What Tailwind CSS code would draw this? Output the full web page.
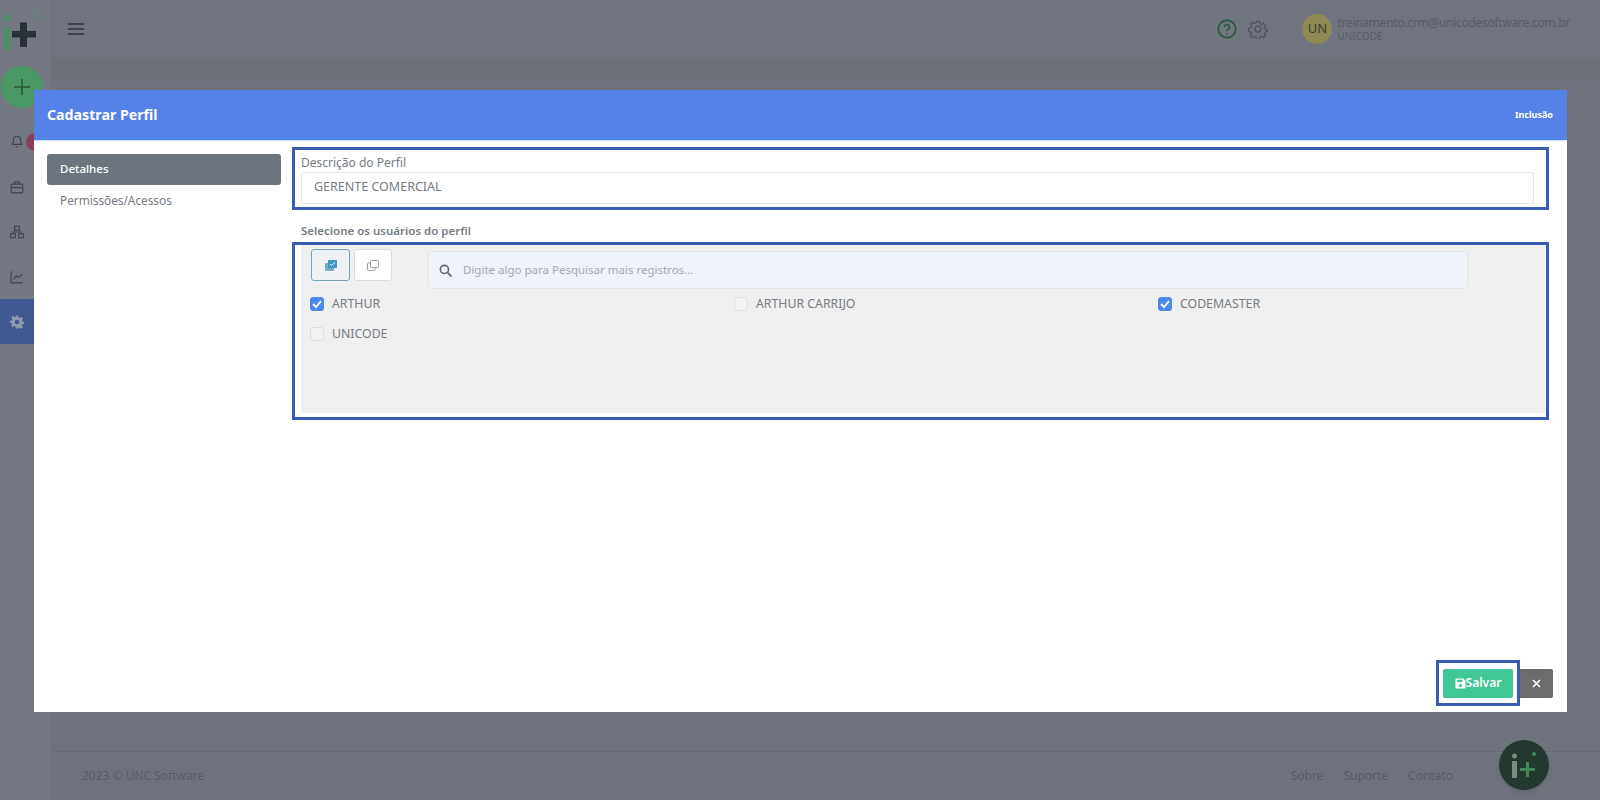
<!DOCTYPE html>
<html lang="pt-BR">
<head>
    <meta charset="UTF-8">
    <title>Cadastrar Perfil</title>
    <script src="https://cdn.jsdelivr.net/npm/@tailwindcss/browser@4"></script>
</head>
<body class="h-[800px] w-[1600px] overflow-hidden bg-[#6f737d] font-['Noto_Sans','Open_Sans',sans-serif] text-[#585c68]">

    <!-- page behind the modal -->
    <div class="flex h-[800px] w-[1600px]">
        <aside class="flex w-[52px] shrink-0 flex-col border-r border-[#6c7079] bg-[#747882]">
            <div class="h-[58px] pt-[10px]">
                <svg width="42" height="42" viewBox="0 0 42 42">
                    <circle cx="7" cy="8" r="3.500" fill="#4d8f63"/>
                    <rect x="4" y="17" width="6" height="23" fill="#4d8f63"/>
                    <path d="M20 12.500h7V21h9v6.500h-9V37h-7v-9.500h-8V21h8z" fill="#2a3038"/>
                    <circle cx="36" cy="5" r="3" fill="none" stroke="#5d8f70"/>
                </svg>
            </div>
            <div class="ml-[1px] mt-[8px] flex h-[42px] w-[42px] items-center justify-center rounded-full bg-[#4a9866]">
                <svg width="18" height="18" viewBox="0 0 18 18" stroke="#2b5a3d" stroke-width="1.600"><path d="M9 1v16M1 9h16"/></svg>
            </div>
            <div class="mt-[11px] flex flex-col">
                <div class="flex h-[45px] items-center pl-[10px]">
                    <svg width="14" height="15" viewBox="0 0 24 24" fill="none" stroke="#3f434c" stroke-width="2"><path d="M18 9a6 6 0 1 0-12 0c0 7-3 8-3 8h18s-3-1-3-8M10 21h4"/></svg>
                    <span class="ml-[2px] h-[18px] w-[18px] rounded-full bg-[#8c3f5c]"></span>
                </div>
                <div class="flex h-[45px] items-center pl-[10px]">
                    <svg width="14" height="14" viewBox="0 0 24 24" fill="none" stroke="#3f434c" stroke-width="2"><rect x="2" y="7" width="20" height="15" rx="2"/><path d="M8 7V3h8v4M2 13h20"/></svg>
                </div>
                <div class="flex h-[45px] items-center pl-[10px]">
                    <svg width="14" height="14" viewBox="0 0 24 24" fill="none" stroke="#3f434c" stroke-width="2"><rect x="8" y="2" width="8" height="7"/><rect x="1" y="15" width="8" height="7"/><rect x="15" y="15" width="8" height="7"/><path d="M5 15v-3h14v3"/></svg>
                </div>
                <div class="flex h-[45px] items-center pl-[10px]">
                    <svg width="14" height="14" viewBox="0 0 24 24" fill="none" stroke="#3f434c" stroke-width="2"><path d="M2 2v20h20M6 16l5-6 4 3 6-6"/></svg>
                </div>
                <div class="flex h-[45px] items-center bg-[#40588f] pl-[10px]">
                    <svg width="14" height="14" viewBox="0 0 24 24" fill="#8f99b0"><path d="M10 1h4l.6 3.200 2 .8L19.400 3.200l2.800 2.800-1.800 2.800.8 2 3.200.6v4l-3.200.6-.8 2 1.800 2.800-2.800 2.800-2.800-1.800-2 .8L14 23h-4l-.6-3.200-2-.8-2.800 1.800-2.800-2.800 1.800-2.800-.8-2L0 14v-4l3.200-.6.8-2L2.200 4.600 5 1.800l2.800 1.800 2-.8zM12 8a4 4 0 1 0 0 8 4 4 0 0 0 0-8z"/></svg>
                </div>
            </div>
        </aside>

        <main class="flex min-w-0 flex-1 flex-col">
            <header class="flex h-[58px] items-center bg-[#71757f] pl-[16px] pr-[30px]">
                <svg width="16" height="12" viewBox="0 0 16 12" stroke="#2f333b" stroke-width="1.700"><path d="M0 1h16M0 6h16M0 11h16"/></svg>
                <div class="ml-auto flex items-center">
                    <svg width="20" height="20" viewBox="0 0 24 24" fill="none" stroke="#2b5a3d" stroke-width="2.200"><circle cx="12" cy="12" r="10.500"/><path d="M9 9.500a3 3 0 1 1 4.500 2.600c-1 .6-1.500 1.200-1.500 2.400M12 17v1.500"/></svg>
                    <svg class="ml-[11px]" width="20" height="20" viewBox="0 0 24 24" fill="none" stroke="#4f535f" stroke-width="1.700"><circle cx="12" cy="12" r="3.500"/><path d="M10 2h4l.6 3 2.200 1 2.600-1.700 2.800 2.800-1.700 2.600 1 2.300 3 .6v2.800l-3 .6-1 2.200 1.700 2.600-2.800 2.800-2.600-1.700-2.200 1-.6 3h-4l-.6-3-2.200-1-2.600 1.700-2.800-2.800 1.700-2.600-1-2.200-3-.6V11l3-.6 1-2.300-1.700-2.600 2.800-2.800 2.600 1.700 2.200-1z" transform="translate(1.200 1.200) scale(.9)"/></svg>
                    <div class="ml-[34px] flex h-[30px] w-[30px] items-center justify-center rounded-full bg-[#8f8a52] text-[13px] text-[#3e3f33]">UN</div>
                    <div class="ml-[5px] flex flex-col">
                        <span class="text-[12px] leading-[15px] tracking-[-0.28px]">treinamento.crm@unicodesoftware.com.br</span>
                        <span class="text-[10px] leading-[13px]">UNICODE</span>
                    </div>
                </div>
            </header>
            <div class="h-[22px] bg-[#6d717a]"></div>
            <div class="flex-1"></div>
            <footer class="flex h-[49px] items-center border-t border-[#686c76] pl-[30px] pr-[147px] text-[12px]">
                <span>2023 © UNC Software</span>
                <nav class="ml-auto flex gap-[20px]">
                    <span>Sobre</span>
                    <span>Suporte</span>
                    <span>Contato</span>
                </nav>
            </footer>
        </main>
    </div>

    <!-- floating button -->
    <div class="fixed left-[1499px] top-[740px] flex h-[50px] w-[50px] items-center justify-center rounded-full bg-[#23392f] shadow-md">
        <svg width="26" height="28" viewBox="0 0 26 28">
            <circle cx="3.500" cy="5" r="2.500" fill="#7d8a82"/>
            <rect x="1" y="10" width="5" height="17" fill="#7d8a82"/>
            <path d="M15 11h3v6h6v3h-6v6h-3v-6H9v-3h6z" fill="#3f8a58"/>
            <circle cx="23" cy="3" r="2" fill="#3f8a58"/>
        </svg>
    </div>

    <!-- modal -->
    <div class="fixed left-[34px] top-[90px] flex h-[622px] w-[1533px] flex-col bg-white text-[#757c84]">
        <div class="flex h-[51px] shrink-0 items-center justify-between border-b border-[#cfe2ff] bg-[#5582e6] pl-[13px] pr-[14px] text-white">
            <h1 class="text-[14.200px] font-bold">Cadastrar Perfil</h1>
            <span class="text-[9px] font-bold">Inclusão</span>
        </div>
        <div class="flex min-h-0 flex-1">
            <div class="w-[247px] shrink-0 pl-[13px] pt-[13px] text-[11.800px]">
                <div class="flex h-[31px] items-center rounded-[3px] bg-[#6c757d] pb-[1px] pl-[13px] text-[11.500px] font-medium text-white">Detalhes</div>
                <div class="flex h-[31px] items-center pl-[13px]">Permissões/Acessos</div>
            </div>
            <div class="flex min-w-0 flex-1 flex-col pl-[11px] pt-[6px]">
                <div class="h-[63px] w-[1257px] border-[3px] border-[#3b5bb5] pl-[6px] pr-[12px] pt-[5px]">
                    <label class="block text-[12px] leading-[16px]">Descrição do Perfil</label>
                    <div class="mt-[1px] flex h-[32px] items-center rounded-[3px] border border-[#e4e7ea] pb-[1px] pl-[12px] text-[12.500px]">GERENTE COMERCIAL</div>
                </div>
                <div class="mb-[4px] mt-[13px] pl-[9px] text-[11.500px] font-semibold leading-[15px]">Selecione os usuários do perfil</div>
                <div class="h-[178px] w-[1257px] border-[3px] border-[#3b5bb5] pb-[4px] pl-[6px] pr-[1px]">
                    <div class="h-full bg-[#f0f0f0]">
                        <div class="flex h-[44px] pl-[10px] pt-[4px]">
                            <button class="flex h-[32px] w-[39px] items-center justify-center rounded-[3px] border border-[#74a5bd] bg-[#eef2f5]">
                                <svg width="12" height="11" viewBox="0 0 12 11"><rect x="0" y="3" width="9" height="8" rx="1" fill="#7ba9c4"/><rect x="3" y="0" width="9" height="8" rx="1" fill="#3f96c8"/><path d="M5 4l1.500 1.500L10 2.500" stroke="#fff" fill="none"/></svg>
                            </button>
                            <button class="ml-[4px] flex h-[32px] w-[38px] items-center justify-center rounded-[3px] border border-[#dcdcdc] bg-white">
                                <svg width="12" height="11" viewBox="0 0 12 11" fill="none" stroke="#9a9fa5"><rect x="3.500" y=".5" width="8" height="7" rx="1"/><path d="M3 3H1.500a1 1 0 0 0-1 1v5.500a1 1 0 0 0 1 1H7a1 1 0 0 0 1-1V8"/></svg>
                            </button>
                            <div class="ml-[36px] mt-[2px] flex h-[38px] w-[1040px] items-center rounded-[3px] border border-[#e3e6ea] bg-[#eff3fa] pl-[10px] text-[11.500px] text-[#a4a9b2]">
                                <svg width="13" height="13" viewBox="0 0 24 24" fill="none" stroke="#5f6670" stroke-width="3"><circle cx="10" cy="10" r="7.500"/><path d="M16 16l7 7"/></svg>
                                <span class="ml-[11px]">Digite algo para Pesquisar mais registros...</span>
                            </div>
                        </div>
                        <div class="grid grid-cols-[424px_424px_1fr] pl-[9px] text-[12.300px]">
                            <label class="flex h-[30px] items-center">
                                <span class="flex h-[14px] w-[14px] items-center justify-center rounded-[3px] bg-[#4c8bea]"><svg width="10" height="8" viewBox="0 0 10 8" fill="none" stroke="#fff" stroke-width="1.800"><path d="M1 4l3 3 5-6"/></svg></span>
                                <span class="ml-[8px]">ARTHUR</span>
                            </label>
                            <label class="flex h-[30px] items-center">
                                <span class="h-[14px] w-[14px] rounded-[3px] border border-[#dedede] bg-[#f3f3f3]"></span>
                                <span class="ml-[8px]">ARTHUR CARRIJO</span>
                            </label>
                            <label class="flex h-[30px] items-center">
                                <span class="flex h-[14px] w-[14px] items-center justify-center rounded-[3px] bg-[#4c8bea]"><svg width="10" height="8" viewBox="0 0 10 8" fill="none" stroke="#fff" stroke-width="1.800"><path d="M1 4l3 3 5-6"/></svg></span>
                                <span class="ml-[8px]">CODEMASTER</span>
                            </label>
                            <label class="flex h-[30px] items-center">
                                <span class="h-[14px] w-[14px] rounded-[3px] border border-[#dedede] bg-[#f3f3f3]"></span>
                                <span class="ml-[8px]">UNICODE</span>
                            </label>
                        </div>
                    </div>
                </div>
                <div class="mt-auto flex items-center justify-end pb-[6px] pr-[14px]">
                    <div class="z-10 -mr-[1px] flex h-[46px] w-[84px] items-center justify-center border-[3px] border-[#3b5bb5] bg-white">
                        <button class="flex h-[29px] w-[70px] items-center justify-center rounded-[2px] bg-[#41c796] text-[12px] font-semibold text-white">
                            <svg width="11" height="11" viewBox="0 0 24 24" fill="#fff"><path d="M3 1h15l5 5v15a2 2 0 0 1-2 2H3a2 2 0 0 1-2-2V3a2 2 0 0 1 2-2zm2 3v5h11V4zm7 9a3.500 3.500 0 1 0 0 7 3.500 3.500 0 0 0 0-7z"/></svg>
                            Salvar
                        </button>
                    </div>
                    <button class="flex h-[29px] w-[34px] items-center justify-center rounded-r-[2px] bg-[#6c6c6c]">
                        <svg width="9" height="9" viewBox="0 0 9 9" stroke="#fff" stroke-width="1.600"><path d="M1 1l7 7M8 1l-7 7"/></svg>
                    </button>
                </div>
            </div>
        </div>
    </div>
</body>
</html>
